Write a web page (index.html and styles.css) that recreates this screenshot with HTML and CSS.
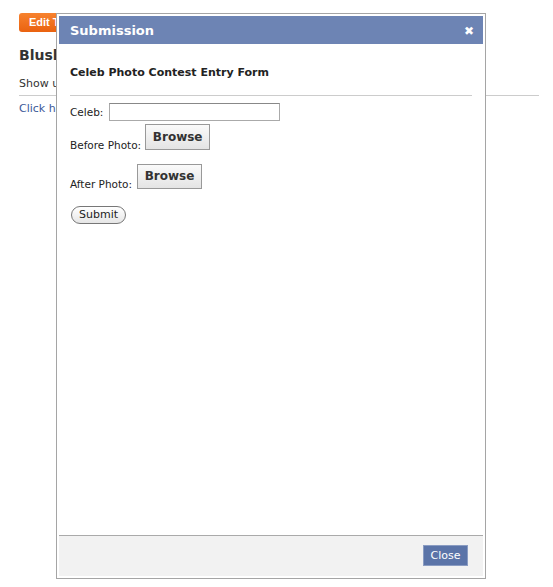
FILE: index.html
```html
<!doctype html>
<html>
 <head>
  <meta charset="UTF-8">
  <title>Submission</title>
  <link rel="stylesheet" href="styles.css">
 </head>
 <body>
  <!-- page behind the dialog -->
  <div class="page">
	<a class="editBtn" href="#">Edit This Page</a>
	<h2 class="pageTitle">Blushing Celebs</h2>
	<p class="intro">Show us your favourite celebrity before and after.</p>
	<p class="link"><a href="#">Click here to enter the contest</a></p>
  </div>

  <!-- dialog -->
  <div class="dialog">
	<div class="dialogHead">
		<span class="dialogTitle">Submission</span>
		<span class="closeX">&#10006;</span>
	</div>
	<div class="dialogBody">
		<h3 class="formTitle">Celeb Photo Contest Entry Form</h3>
		<form class="entryForm">
			<div class="row celebRow">
				<label>Celeb:</label>
				<input class="textInput" type="text">
			</div>
			<div class="row beforeRow">
				<label>Before Photo:</label>
				<span class="browse">Browse</span>
			</div>
			<div class="row afterRow">
				<label>After Photo:</label>
				<span class="browse">Browse</span>
			</div>
			<div class="row submitRow">
				<span class="submit">Submit</span>
			</div>
		</form>
	</div>
	<div class="dialogFoot">
		<span class="closeBtn">Close</span>
	</div>
  </div>
 </body>
</html>
```
FILE: styles.css
```css
*{
	margin:0;
	padding:0;
	box-sizing:border-box;
}
body{
	font-family:"DejaVu Sans","Liberation Sans",sans-serif;
	font-size:11px;
	color:#333;
	background:#fff;
}
a{
	color:#3b5998;
	text-decoration:none;
}
.page{
	padding:13px 14px 0 19px;
}
.editBtn{
	display:inline-block;
	height:19px;
	line-height:19px;
	padding:0 10px;
	background:linear-gradient(#f7822e,#ea6210);
	border-radius:3px;
	color:#fff;
	font-family:"Liberation Sans",sans-serif;
	font-weight:bold;
	font-size:11px;
}
.pageTitle{
	margin-top:15px;
	font-size:14px;
	color:#333;
}
.intro{
	margin-top:14px;
	padding-bottom:5px;
	border-bottom:1px solid #ccc;
}
.link{
	margin-top:6px;
}

.dialog{
	position:absolute;
	left:56px;
	top:13px;
	width:430px;
	height:566px;
	border:1px solid #a5a5a5;
	padding:2px;
	background:#fff;
	display:flex;
	flex-direction:column;
}
.dialogHead{
	height:28px;
	background:#6d84b4;
	display:flex;
	align-items:center;
	justify-content:space-between;
	padding:1px 9px 0 11px;
	color:#fff;
}
.dialogTitle{
	font-size:13px;
	font-weight:bold;
}
.closeX{
	font-size:12px;
	font-weight:bold;
}
.dialogBody{
	flex:1;
	padding:0 11px;
}
.formTitle{
	font-size:11px;
	line-height:13px;
	font-weight:bold;
	color:#222;
	padding:22px 0 16px;
	border-bottom:1px solid #ccc;
}
.entryForm{
	padding-top:7px;
	color:#222;
}
.row{
	display:flex;
	align-items:flex-end;
	gap:4px;
}
.row label{
	font-size:10.5px;
	line-height:13px;
	margin-bottom:-2px;
}
.celebRow{
	align-items:center;
	gap:6px;
}
.celebRow label{
	margin-bottom:0;
}
.textInput{
	width:171px;
	height:18px;
	border:1px solid #aaa;
	border-top-color:#888;
}
.beforeRow{
	margin-top:3px;
}
.afterRow{
	margin-top:14px;
}
.submitRow{
	margin-top:17px;
}
.browse{
	display:inline-block;
	height:26px;
	line-height:24px;
	width:65px;
	text-align:center;
	border:1px solid #999;
	background:linear-gradient(#fafafa,#e4e4e4);
	font-size:12px;
	font-weight:bold;
	color:#333;
}
.afterRow .browse{
	height:25px;
	line-height:23px;
	margin-left:1px;
}
.submit{
	display:inline-block;
	width:55px;
	height:18px;
	line-height:16px;
	text-align:center;
	margin-left:1px;
	border:1px solid #777;
	border-radius:9px;
	background:linear-gradient(#fff,#e6e6e6);
	font-size:11px;
}
.dialogFoot{
	height:41px;
	background:#f2f2f2;
	border-top:1px solid #aaa;
	display:flex;
	align-items:center;
	justify-content:flex-end;
	padding:0 15px 2px 0;
}
.closeBtn{
	display:inline-block;
	width:45px;
	height:21px;
	line-height:19px;
	text-align:center;
	background:#5b74a8;
	border:1px solid #8a9cc2;
	color:#fff;
	font-size:11px;
}
```
